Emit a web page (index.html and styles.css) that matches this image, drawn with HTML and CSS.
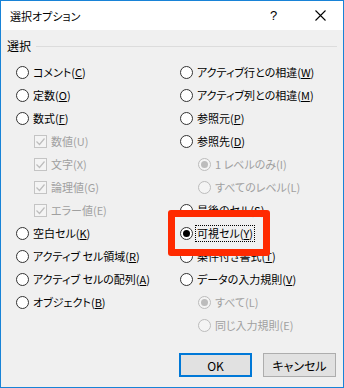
FILE: index.html
```html
<html><head>
<meta charset="UTF-8">
<title>選択オプション</title>
<link rel="stylesheet" href="styles.css">
</head>
<body>
<div class="dialog">
  <div class="titlebar">
    <span class="title">選択オプション</span>
    <span class="help">?</span>
    <span class="close"><svg width="11" height="11" viewBox="0 0 11 11"><path d="M0.5 0.5 L10.5 10.5 M10.5 0.5 L0.5 10.5" stroke="#000" stroke-width="1.1" fill="none"/></svg></span>
  </div>
  <div class="body">
    <div class="group-head"><span>選択</span><div class="rule"></div></div>
    <div class="cols">
      <div class="col">
        <div class="opt"><span class="radio"></span><span class="lbl">コメント(<u>C</u>)</span></div>
        <div class="opt"><span class="radio"></span><span class="lbl">定数(<u>O</u>)</span></div>
        <div class="opt"><span class="radio"></span><span class="lbl">数式(<u>F</u>)</span></div>
        <div class="opt sub off"><span class="check"><svg width="11" height="11" viewBox="0 0 11 11"><path d="M1.5 5.5 L4.5 8.5 L9.5 2.5" stroke="#bdbdbd" stroke-width="1.2" fill="none"/></svg></span><span class="lbl">数値(U)</span></div>
        <div class="opt sub off"><span class="check"><svg width="11" height="11" viewBox="0 0 11 11"><path d="M1.5 5.5 L4.5 8.5 L9.5 2.5" stroke="#bdbdbd" stroke-width="1.2" fill="none"/></svg></span><span class="lbl">文字(X)</span></div>
        <div class="opt sub off"><span class="check"><svg width="11" height="11" viewBox="0 0 11 11"><path d="M1.5 5.5 L4.5 8.5 L9.5 2.5" stroke="#bdbdbd" stroke-width="1.2" fill="none"/></svg></span><span class="lbl">論理値(G)</span></div>
        <div class="opt sub off"><span class="check"><svg width="11" height="11" viewBox="0 0 11 11"><path d="M1.5 5.5 L4.5 8.5 L9.5 2.5" stroke="#bdbdbd" stroke-width="1.2" fill="none"/></svg></span><span class="lbl">エラー値(E)</span></div>
        <div class="opt"><span class="radio"></span><span class="lbl">空白セル(<u>K</u>)</span></div>
        <div class="opt"><span class="radio"></span><span class="lbl">アクティブ セル領域(<u>R</u>)</span></div>
        <div class="opt"><span class="radio"></span><span class="lbl">アクティブ セルの配列(<u>A</u>)</span></div>
        <div class="opt"><span class="radio"></span><span class="lbl">オブジェクト(<u>B</u>)</span></div>
      </div>
      <div class="col">
        <div class="opt"><span class="radio"></span><span class="lbl">アクティブ行との相違(<u>W</u>)</span></div>
        <div class="opt"><span class="radio"></span><span class="lbl">アクティブ列との相違(<u>M</u>)</span></div>
        <div class="opt"><span class="radio"></span><span class="lbl">参照元(<u>P</u>)</span></div>
        <div class="opt"><span class="radio"></span><span class="lbl">参照先(<u>D</u>)</span></div>
        <div class="opt sub off"><span class="radio on"></span><span class="lbl">1 レベルのみ(I)</span></div>
        <div class="opt sub off"><span class="radio"></span><span class="lbl">すべてのレベル(L)</span></div>
        <div class="opt"><span class="radio"></span><span class="lbl">最後のセル(<u>S</u>)</span></div>
        <div class="opt"><span class="radio on"></span><span class="lbl focus">可視セル(<u>Y</u>)</span></div>
        <div class="opt"><span class="radio"></span><span class="lbl">条件付き書式(<u>T</u>)</span></div>
        <div class="opt"><span class="radio"></span><span class="lbl">データの入力規則(<u>V</u>)</span></div>
        <div class="opt sub off"><span class="radio on"></span><span class="lbl">すべて(L)</span></div>
        <div class="opt sub off"><span class="radio"></span><span class="lbl">同じ入力規則(E)</span></div>
      </div>
    </div>
    <div class="buttons">
      <button class="btn default">OK</button>
      <button class="btn">キャンセル</button>
    </div>
    <div class="highlight"></div>
  </div>
</div>
</body></html>
```

FILE: styles.css
```css
body {
  margin: 0;
  font-family: "Noto Sans CJK JP", "Noto Sans", sans-serif;
  font-size: 11px;
  font-feature-settings: "palt";
  color: #000;
}
.dialog {
  width: 344px;
  height: 388px;
  box-sizing: border-box;
  border: 1px solid #1883d7;
  background: #f0f0f0;
  position: relative;
}
.titlebar {
  height: 29px;
  background: #fff;
  display: flex;
  align-items: center;
  padding-left: 9px;
}
.title {
  font-size: 11px;
  flex: 1;
}
.help {
  font-size: 13px;
  width: 12px;
  margin-right: 33px;
  font-family: "Liberation Sans", sans-serif;
}
.close {
  display: flex;
  margin-right: 17px;
}
.group-head {
  display: flex;
  align-items: center;
  padding: 9px 6px 0 6px;
  height: 14px;
  line-height: 14px;
  font-size: 12px;
}
.rule {
  flex: 1;
  height: 1px;
  background: #dcdcdc;
  margin-left: 5px;
}
.cols {
  display: grid;
  grid-template-columns: 164px 1fr;
  padding-left: 15px;
  margin-top: 8px;
  align-items: start;
}
.opt {
  height: 23px;
  display: flex;
  align-items: center;
}
.opt.sub {
  padding-left: 18px;
}
.off .lbl {
  color: #a0a0a0;
}
.radio {
  width: 13px;
  height: 13px;
  box-sizing: border-box;
  border: 1px solid #333;
  border-radius: 50%;
  background: #fff;
  display: flex;
  align-items: center;
  justify-content: center;
}
.radio.on::after {
  content: "";
  width: 7px;
  height: 7px;
  border-radius: 50%;
  background: #000;
}
.off .radio {
  border-color: #bcbcbc;
  background: #f4f4f4;
}
.off .radio.on::after {
  background: #bcbcbc;
}
.check {
  width: 13px;
  height: 13px;
  box-sizing: border-box;
  border: 1px solid #c4c4c4;
  background: #f4f4f4;
  display: flex;
  align-items: center;
  justify-content: center;
}
.lbl {
  margin-left: 2px;
  padding: 0 1px;
  border: 1px dotted transparent;
  line-height: 15px;
  white-space: nowrap;
}
.lbl u {
  text-underline-offset: 1px;
}
.lbl.focus {
  border-color: #000;
}
.buttons {
  display: flex;
  justify-content: flex-end;
  gap: 11px;
  padding-right: 7px;
  margin-top: 16px;
}
.btn {
  width: 73px;
  height: 24px;
  box-sizing: border-box;
  background: #e1e1e1;
  border: 1px solid #adadad;
  font-family: inherit;
  font-size: 12px;
  font-feature-settings: "palt";
  padding: 0;
  color: #000;
}
.btn.default {
  border: 2px solid #0078d7;
}
.highlight {
  position: absolute;
  left: 167px;
  top: 209px;
  width: 102px;
  height: 46px;
  box-sizing: border-box;
  border: 7px solid #ff2a00;
  border-radius: 3px;
}
```
